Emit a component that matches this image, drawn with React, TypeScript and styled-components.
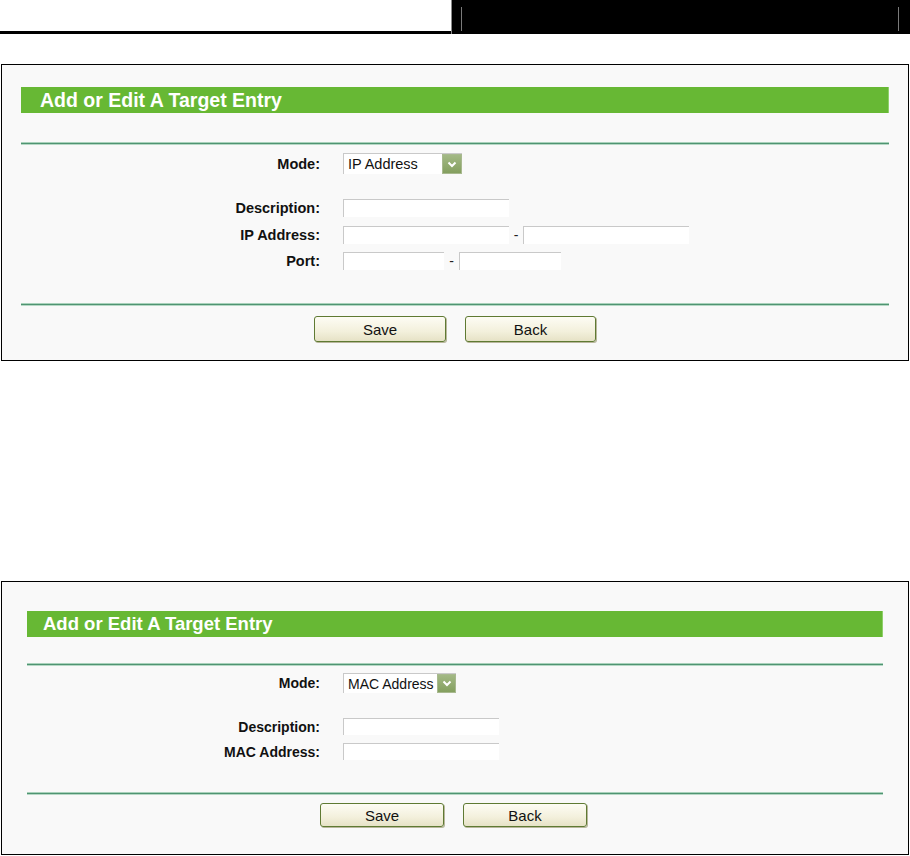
import React from "react";
import styled, { createGlobalStyle } from "styled-components";

const Global = createGlobalStyle`
  html, body { margin: 0; padding: 0; background: #ffffff; }
  body { font-family: "Liberation Sans", Arial, sans-serif; color: #000; }
`;

const Header = styled.div`
  display: flex;
  height: 34px;
`;

const HeaderLeft = styled.div`
  flex: 0 0 451px;
  height: 31px;
  border-bottom: 3px solid #000;
`;

const HeaderRight = styled.div`
  flex: 1;
  background: #000;
  border-left: 1px solid #8a8a8a;
  box-sizing: border-box;
  padding: 7px 11px 3px 9px;
  height: 34px;
  display: flex;
`;

const HeaderInner = styled.div`
  flex: 1;
  border-left: 1px solid #7a7a7a;
  border-right: 1px solid #7a7a7a;
  height: 24px;
`;

type PanelProps = {
  $mt: number;
  $pt: number;
  $pb: number;
  $px: number;
};

const Panel = styled.section<PanelProps>`
  margin: ${(p) => p.$mt}px 0 0 1px;
  width: 908px;
  box-sizing: border-box;
  border: 1px solid #000;
  background: #f9f9f9;
  padding: ${(p) => `${p.$pt}px ${p.$px}px ${p.$pb}px`};
`;

const TitleBar = styled.h2<{ $size: number; $indent: number }>`
  margin: 0;
  height: 26px;
  display: flex;
  align-items: center;
  background: #67b834;
  border-right: 1px solid #8fd06b;
  color: #ffffff;
  font-family: "Liberation Sans", Arial, sans-serif;
  font-weight: bold;
  font-size: ${(p) => p.$size}px;
  padding-left: ${(p) => p.$indent}px;
  letter-spacing: 0;
`;

const Divider = styled.div<{ $mt: number }>`
  margin-top: ${(p) => p.$mt}px;
  height: 3px;
  background: linear-gradient(#a9d2bb 0, #a9d2bb 1px, #4f9472 1px, #4f9472 2px, #b6d8c5 2px);
`;

const Row = styled.div<{ $mt: number; $h: number; $label: number }>`
  display: grid;
  grid-template-columns: ${(p) => p.$label}px auto;
  column-gap: 23px;
  align-items: center;
  margin-top: ${(p) => p.$mt}px;
  height: ${(p) => p.$h}px;
`;

const Label = styled.label<{ $size: number }>`
  text-align: right;
  font-weight: bold;
  font-size: ${(p) => p.$size}px;
  color: #111;
  white-space: nowrap;
`;

const Fields = styled.div`
  display: flex;
  align-items: center;
  height: 100%;
`;

const TextBox = styled.div<{ $w: number }>`
  width: ${(p) => p.$w}px;
  height: 100%;
  box-sizing: border-box;
  background: #ffffff;
  border-top: 1px solid #c9c9c9;
  border-left: 1px solid #c9c9c9;
`;

const Dash = styled.span<{ $w: number }>`
  width: ${(p) => p.$w}px;
  text-align: center;
  font-size: 14px;
  color: #222;
`;

const Select = styled.div<{ $w: number; $size: number }>`
  width: ${(p) => p.$w}px;
  height: 100%;
  box-sizing: border-box;
  background: #ffffff;
  border-top: 1px solid #c9c9c9;
  border-left: 1px solid #c9c9c9;
  display: flex;
  align-items: center;
  font-size: ${(p) => p.$size}px;
  color: #111;
`;

const SelectText = styled.span`
  flex: 1;
  padding-left: 4px;
  white-space: nowrap;
  overflow: hidden;
`;

const SelectArrow = styled.span<{ $w: number }>`
  width: ${(p) => p.$w}px;
  height: 100%;
  box-sizing: border-box;
  border: 1px solid #a8b98f;
  background: linear-gradient(#a3b985, #849f5f);
  display: flex;
  align-items: center;
  justify-content: center;
`;

const ButtonBar = styled.div<{ $mt: number; $h: number; $pl: number; $gap: number }>`
  display: flex;
  gap: ${(p) => p.$gap}px;
  margin-top: ${(p) => p.$mt}px;
  height: ${(p) => p.$h}px;
  padding-left: ${(p) => p.$pl}px;
`;

const Button = styled.button<{ $w: number }>`
  width: ${(p) => p.$w}px;
  height: 100%;
  box-sizing: border-box;
  border: 1px solid #5f7a33;
  border-radius: 3px;
  background: linear-gradient(#fdfcf4, #f3f0dc 60%, #e6e2c6);
  box-shadow: 1px 1px 0 #b9b79c;
  font-family: "Liberation Sans", Arial, sans-serif;
  font-size: 15px;
  color: #111;
  padding: 0;
  cursor: pointer;
`;

const Chevron = () => (
  <svg width="10" height="7" viewBox="0 0 10 7">
    <polyline points="1.5,1.5 5,5 8.5,1.5" fill="none" stroke="#ffffff" strokeWidth="2" />
  </svg>
);

export default function App() {
  return (
    <>
      <Global />
      <Header>
        <HeaderLeft />
        <HeaderRight>
          <HeaderInner />
        </HeaderRight>
      </Header>

      <Panel $mt={30} $pt={22} $pb={18} $px={19}>
        <TitleBar $size={19.5} $indent={19}>Add or Edit A Target Entry</TitleBar>
        <Divider $mt={29} />
        <Row $mt={8} $h={21} $label={299}>
          <Label $size={14.5}>Mode:</Label>
          <Fields>
            <Select $w={119} $size={14.5}>
              <SelectText>IP Address</SelectText>
              <SelectArrow $w={20}><Chevron /></SelectArrow>
            </Select>
          </Fields>
        </Row>
        <Row $mt={25} $h={18} $label={299}>
          <Label $size={14.5}>Description:</Label>
          <Fields>
            <TextBox $w={166} />
          </Fields>
        </Row>
        <Row $mt={9} $h={18} $label={299}>
          <Label $size={14.5}>IP Address:</Label>
          <Fields>
            <TextBox $w={166} />
            <Dash $w={14}>-</Dash>
            <TextBox $w={166} />
          </Fields>
        </Row>
        <Row $mt={8} $h={18} $label={299}>
          <Label $size={14.5}>Port:</Label>
          <Fields>
            <TextBox $w={101} />
            <Dash $w={15}>-</Dash>
            <TextBox $w={102} />
          </Fields>
        </Row>
        <Divider $mt={33} />
        <ButtonBar $mt={10} $h={26} $pl={293} $gap={19}>
          <Button $w={132}>Save</Button>
          <Button $w={131}>Back</Button>
        </ButtonBar>
      </Panel>

      <Panel $mt={220} $pt={29} $pb={27} $px={25}>
        <TitleBar $size={18.5} $indent={16}>Add or Edit A Target Entry</TitleBar>
        <Divider $mt={26} />
        <Row $mt={7} $h={20} $label={293}>
          <Label $size={14}>Mode:</Label>
          <Fields>
            <Select $w={113} $size={14}>
              <SelectText>MAC Address</SelectText>
              <SelectArrow $w={19}><Chevron /></SelectArrow>
            </Select>
          </Fields>
        </Row>
        <Row $mt={25} $h={17} $label={293}>
          <Label $size={14}>Description:</Label>
          <Fields>
            <TextBox $w={156} />
          </Fields>
        </Row>
        <Row $mt={8} $h={17} $label={293}>
          <Label $size={14}>MAC Address:</Label>
          <Fields>
            <TextBox $w={156} />
          </Fields>
        </Row>
        <Divider $mt={32} />
        <ButtonBar $mt={8} $h={24} $pl={293} $gap={19}>
          <Button $w={124}>Save</Button>
          <Button $w={124}>Back</Button>
        </ButtonBar>
      </Panel>
    </>
  );
}
